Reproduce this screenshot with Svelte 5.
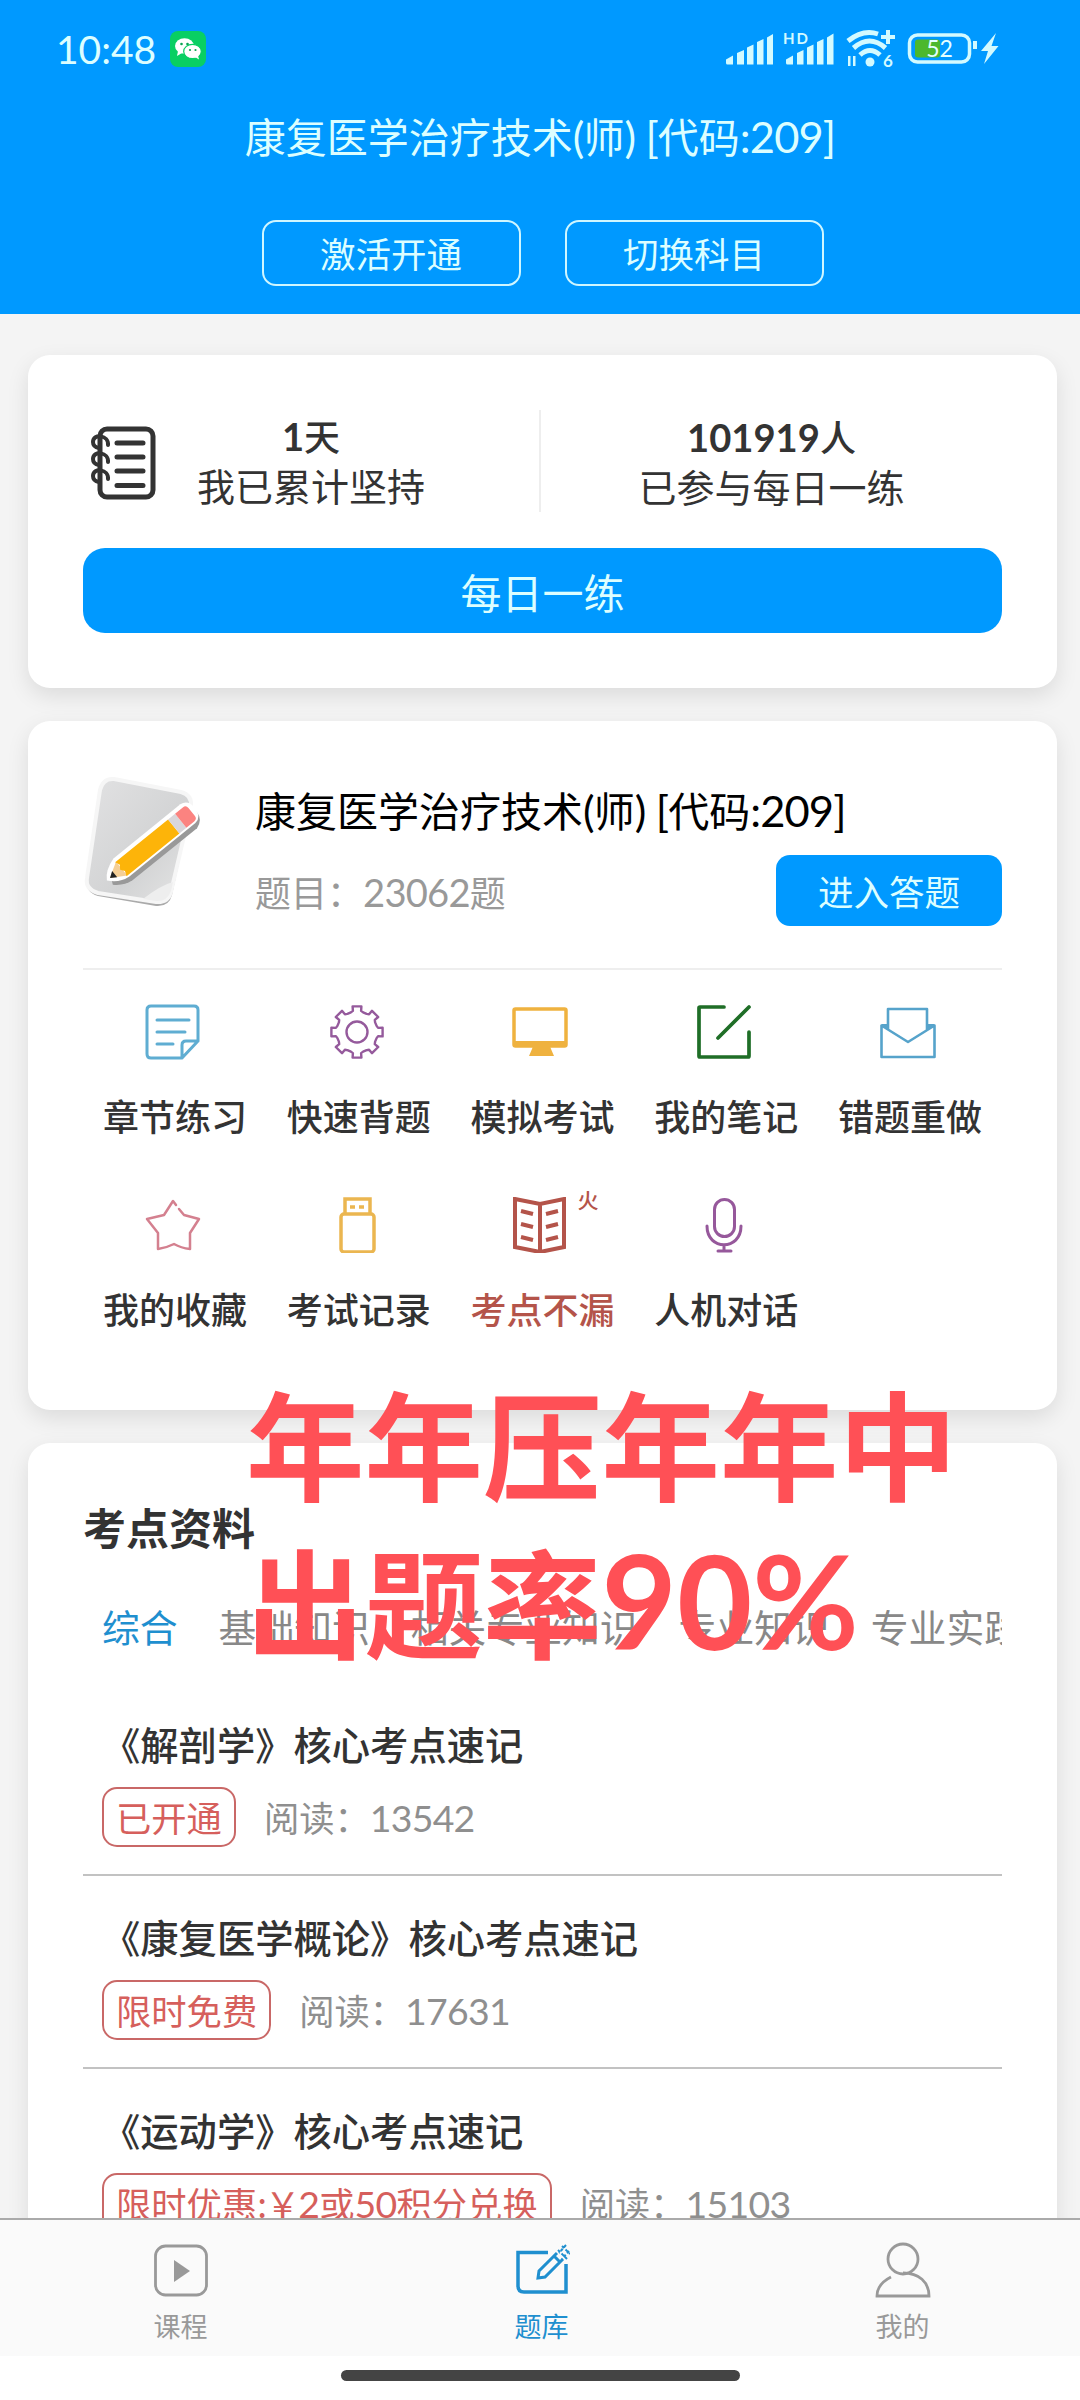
<script>
  const title = '康复医学治疗技术'

  let tools = [
    { icon: 'note', name: '章节练习', color: '#5fadd2' },
    { icon: 'gear', name: '快速背题', color: '#955a9c' },
    { icon: 'screen', name: '模拟考试', color: '#efb23f' },
    { icon: 'edit', name: '我的笔记', color: '#1f6e27' },
    { icon: 'mail', name: '错题重做', color: '#56a3cb' },
    { icon: 'star', name: '我的收藏', color: '#d4808f' },
    { icon: 'usb', name: '考试记录', color: '#ebb650' },
    { icon: 'book', name: '考点不漏', color: '#b4544a', hot: true },
    { icon: 'mic', name: '人机对话', color: '#96589b' }
  ]

  let tabs = ['综合', '基础知识', '相关专业知识', '专业知识', '专业实践能力']
  let activeTab = $state(0)

  let materials = [
    { name: '《解剖学》核心考点速记', tag: ['已开通'], reads: 13542 },
    { name: '《康复医学概论》核心考点速记', tag: ['限时免费'], reads: 17631 },
    { name: '《运动学》核心考点速记', tag: ['限时优惠', ':￥', '2', '或', '50', '积分兑换'], reads: 15103 }
  ]

  let nav = [
    { icon: 'play', name: '课程' },
    { icon: 'bank', name: '题库' },
    { icon: 'user', name: '我的' }
  ]
  let activeNav = $state(1)

  // outline of the eight-tooth gear, drawn around 0,0
  let gear = () => {
    let points = []
    for (let i = 0; i < 8; i++) {
      let a = i * Math.PI / 4
      let corners = [[-0.3, 20.5], [-0.19, 21.5], [-0.17, 26], [0.17, 26], [0.19, 21.5], [0.3, 20.5]]
      for (let [da, r] of corners) {
        points.push(`${(Math.sin(a + da) * r).toFixed(1)},${(-Math.cos(a + da) * r).toFixed(1)}`)
      }
    }
    return points.join(' ')
  }
</script>

<div class="screen">
  <header>
    <div class="status">
      <span class="clock">10:48</span>
      <svg class="wechat" viewBox="0 0 36 36">
        <rect width="36" height="36" rx="8" fill="#09cf63" />
        <ellipse cx="14.500" cy="15" rx="9.500" ry="7.800" fill="#fff" />
        <path d="M8 20l-1 5 5-3z" fill="#fff" />
        <ellipse cx="22.500" cy="20.500" rx="8.800" ry="7.200" fill="#fff" stroke="#09cf63" stroke-width="1.200" />
        <path d="M25 26l4 2.500-1-4z" fill="#fff" />
        <g fill="#09a452">
          <circle cx="11.500" cy="13" r="1.300" /><circle cx="17.500" cy="13" r="1.300" />
          <circle cx="20" cy="19" r="1.100" /><circle cx="25.500" cy="19" r="1.100" />
        </g>
      </svg>
      <svg class="signals" viewBox="0 0 300 40">
        <g fill="#d3faff">
          <path d="M0 30.500l7-4v9H1.500q-1.500 0-1.500-1.500zM11 24l7-3v14.500h-7zM21 18.500l6.500-3v20H21zM31 13l6.500-3v25.500H31zM41 8.500l6-3.500v30.500h-6z" />
          <path d="M60 30.500l7-4v9h-5.500q-1.500 0-1.500-1.500zM71 24l6.500-3v14.500H71zM81 18.500l6.500-3v20H81zM91 13l6.500-3v25.500H91zM101 8.500l6.500-4v31H101z" />
          <text x="57" y="15" font-size="15" font-weight="bold" textLength="25">HD</text>
          <circle cx="144" cy="33" r="4.500" />
          <text x="157" y="38" font-size="17" font-weight="bold">6</text>
          <path d="M160 1h4v5h5v4h-5v5h-4v-5h-5V6h5z" />
          <path d="M122 27v10h2.500V27zM127 27v10h2.500V27z" />
          <path d="M275 20h4v-8h-4z" transform="translate(-28 0)" />
          <path d="M270 4l-15 18h7l-4 13 14.500-18h-7z" />
        </g>
        <g fill="none" stroke="#d3faff">
          <path d="M122 12q15-12 30-7" stroke-width="5" />
          <path d="M127.500 19q16-14 32 0" stroke-width="5" />
          <path d="M134 26q10-9 20 0" stroke-width="5" />
          <rect x="183.500" y="6" width="60" height="27" rx="8" stroke-width="3.500" />
        </g>
        <rect x="189" y="10.500" width="25" height="18" rx="3" fill="#4cb82d" />
        <text x="213.500" y="28" font-size="23" text-anchor="middle" fill="#e4ffff">52</text>
      </svg>
    </div>
    <h1>{title}<span class="num">(</span>师<span class="num">) [</span>代码<span class="num">:209]</span></h1>
    <div class="actions">
      <button>激活开通</button>
      <button>切换科目</button>
    </div>
  </header>

  <main>
    <section class="card daily">
      <div class="stats">
        <svg class="notebook" viewBox="0 0 66 74" fill="none" stroke="#333" stroke-linecap="round">
          <rect x="10" y="3" width="53" height="68" rx="7" stroke-width="5" />
          <path d="M27 17h26M27 31h26M27 45h26M27 59.500h26" stroke-width="5" />
          <path d="M18 19c1-10-15-12-15-3q0 5 6 6M18 36c1-10-15-12-15-3q0 5 6 6M18 53c1-10-15-12-15-3q0 5 6 6" stroke-width="4" />
        </svg>
        <div class="stat days">
          <b><span class="num">1</span>天</b>
          <span>我已累计坚持</span>
        </div>
        <div class="stat people">
          <b><span class="num">101919</span>人</b>
          <span>已参与每日一练</span>
        </div>
      </div>
      <button class="wide">每日一练</button>
    </section>

    <section class="card bank">
      <div class="subject">
        <svg class="pad" viewBox="0 0 132 134">
          <defs>
            <linearGradient id="paper" x1="0" y1="0" x2="1" y2="1">
              <stop offset="0" stop-color="#e2e2e3" />
              <stop offset=".6" stop-color="#d2d3d4" />
              <stop offset="1" stop-color="#e6e6e6" />
            </linearGradient>
          </defs>
          <path d="M31 5l67 13q11 3 10 14L89 119q-3 12-16 11L15 120Q2 116 4 104L17 16Q20 4 31 5z" fill="#aaa" />
          <path d="M31 3l67 13q11 3 10 14L88 116q-3 11-15 10L15 117Q2 113 4 102L17 14Q20 2 31 3z" fill="url(#paper)" stroke="#f6f6f6" stroke-width="4" />
          <path d="M60 123q18-14 30-17l-2 9q-4 11-15 10z" fill="#eee" />
          <g transform="translate(27 102) rotate(-39)">
            <path d="M-2 4Q1-7 15-11H99q10 1 10 11t-10 13H16Q6 12-2 4z" fill="#999" transform="translate(0 3)" />
            <path d="M-4 0Q1-9 15-13H101q9 1 9 12t-9 12H16Q4 10-4 0z" fill="#fff" />
            <path d="M0 0L15-9V9z" fill="#f5cf96" />
            <path d="M0 0l6-4v8z" fill="#222" />
            <path d="M14-9H82V9H14l2-5-3-4 3-4z" fill="#fdb409" />
            <path d="M82-9h9V9h-9z" fill="#d9d6da" />
            <path d="M91-9h10q4 0 4 4v10q0 4-4 4H91z" fill="#fb8380" />
          </g>
        </svg>
        <div class="info">
          <h2>{title}<span class="num">(</span>师<span class="num">) [</span>代码<span class="num">:209]</span></h2>
          <div class="count">
            <span>题目：<span class="num">23062</span>题</span>
            <button class="enter">进入答题</button>
          </div>
        </div>
      </div>

      <div class="tools">
        {#each tools as tool}
          <div class="tool" class:hot={tool.hot}>
            <svg viewBox="0 0 56 56" fill="none" stroke={tool.color} stroke-width="3" stroke-linecap="round" stroke-linejoin="round">
              {#if tool.icon === 'note'}
                <path d="M53 37V6q0-4-4-4H6Q2 2 2 6v44q0 4 4 4h31L53 37H41q-4 0-4 4v13M12 16h32M12 28h28M12 40h16" />
              {:else if tool.icon === 'gear'}
                <g transform="translate(28 28)" stroke-width="2.400">
                  <polygon points={gear()} />
                  <circle r="10.500" />
                </g>
              {:else if tool.icon === 'screen'}
                <rect x="2" y="5" width="52" height="37" rx="1.500" stroke-width="3.500" />
                <path d="M2 37h52v5H38l1 3 3 7H17l3-7 1-3H2z" fill={tool.color} stroke="none" />
              {:else if tool.icon === 'edit'}
                <path d="M28 3H4q-1 0-1 1v48q0 1 1 1h48q1 0 1-1V28M22 34L53 3" stroke-width="3.700" />
              {:else if tool.icon === 'mail'}
                <path d="M8 25V5h39v20M1.500 21.500v31.500h53V21.500L28 38z" stroke-width="2.600" />
                <path d="M1 20h7v6zM55 20h-7v6z" fill={tool.color} stroke="none" />
              {:else if tool.icon === 'star'}
                <path d="M31 8l-3-4-9 14L2 22l11 14v16q8-1 16-5 7 4 16 5V36L54 22 39 18l-5-6" stroke-width="2.500" />
              {:else if tool.icon === 'usb'}
                <rect x="12" y="17" width="33" height="38" rx="3" stroke-width="3.500" />
                <path d="M16 17V2h25v15M21 10h5M30 10h5" stroke-width="3.500" stroke-linecap="butt" stroke-linejoin="miter" />
              {:else if tool.icon === 'book'}
                <path d="M3 2l25 5 24-5v48l-24 5-25-5zM28 7v48" stroke-width="4" stroke-linejoin="miter" />
                <path d="M9 14l12 3M9 27l12 3M9 40l12 3M34 17l12-3M34 30l12-3M34 43l12-3" stroke-width="4" stroke-linecap="butt" />
              {:else}
                <rect x="18.500" y="2.500" width="20" height="37" rx="10" />
                <path d="M11 29c0 25 34 25 34 0M28 48v6M22 54h13" />
              {/if}
            </svg>
            <span>{tool.name}</span>
            {#if tool.hot}<sup>火</sup>{/if}
          </div>
        {/each}
      </div>
    </section>

    <section class="card materials">
      <h3>考点资料</h3>
      <div class="tabs">
        {#each tabs as tab, i}
          <span class:active={activeTab === i} role="tab" tabindex="0" aria-selected={activeTab === i} onclick={() => activeTab = i} onkeydown={() => activeTab = i}>{tab}</span>
        {/each}
      </div>
      {#each materials as item}
        <article>
          <h4>{item.name}</h4>
          <div class="meta">
            <span class="tag">
              {#each item.tag as part}{#if /^\d+$/.test(part)}<span class="num">{part}</span>{:else if part === ':￥'}<span class="yen">:￥</span>{:else}{part}{/if}{/each}
            </span>
            <span>阅读：<span class="num">{item.reads}</span></span>
          </div>
        </article>
      {/each}
    </section>
  </main>

  <footer>
    <nav>
      {#each nav as item, i}
        <button class:active={activeNav === i} onclick={() => activeNav = i}>
          <svg viewBox="0 0 56 56" fill="none" stroke="currentColor" stroke-width="2.800">
            {#if item.icon === 'play'}
              <rect x="2.500" y="4" width="51" height="49" rx="10" />
              <path d="M21 18l16 11-16 11z" fill="currentColor" stroke="none" />
            {:else if item.icon === 'bank'}
              <path d="M34 10.500H4V44q0 6 6 6h42V22" stroke-width="3.500" />
              <path d="M43 11L25 29l-1 7 7-1 18-18M40 14l6 6" stroke-width="3" />
              <path d="M44 8l9 9M48 4l8 8M52 3l-7 8M55 9l-7 8" stroke-width="2" stroke-dasharray="3 2" />
            {:else}
              <ellipse cx="28" cy="17" rx="15" ry="15" />
              <path d="M16 35Q2 42 2 54h52c0-14-10-23-26-23" />
            {/if}
          </svg>
          <span>{item.name}</span>
        </button>
      {/each}
    </nav>
    <div class="home"></div>
  </footer>

  <div class="slogan">
    <p>年年压年年中</p>
    <p class="second">出题率<span>90%</span></p>
  </div>
</div>

<style>
  :global(body) {
    margin: 0;
    background: #f4f4f4;
  }
  .screen {
    position: relative;
    width: 1080px;
    height: 2400px;
    overflow: hidden;
    display: flex;
    flex-direction: column;
    background: #f4f4f4;
    color: #333;
    font-family: 'Noto Sans CJK SC', sans-serif;
    font-size: 36px;
  }
  h1, h2, h3, h4, p {
    margin: 0;
    font-weight: 400;
  }
  button {
    padding: 0;
    border: none;
    background: none;
    color: inherit;
    font: inherit;
  }
  .num {
    font-family: Lato, sans-serif;
    font-size: 1.06em;
    letter-spacing: -.02em;
    line-height: 1;
  }

  header {
    height: 314px;
    flex: none;
    background: #09f;
    color: #dcfeff;
    text-align: center;
  }
    .status {
      height: 98px;
      display: flex;
      align-items: center;
      padding: 0 54px 0 56px;
      box-sizing: border-box;
    }
      .clock {
        font-family: Lato, sans-serif;
        font-size: 39px;
        width: 114px;
        text-align: left;
      }
      .wechat {
        width: 36px;
        height: 36px;
      }
      .signals {
        width: 300px;
        height: 40px;
        margin-left: auto;
        overflow: visible;
        font-family: Lato, sans-serif;
      }
    h1 {
      font-size: 41px;
      line-height: 74px;
      white-space: pre;
    }
    .actions {
      display: flex;
      justify-content: center;
      gap: 44px;
      margin-top: 48px;
      padding-left: 5px;
    }
      .actions button {
        width: 259px;
        height: 66px;
        box-sizing: border-box;
        border: 2px solid #cff6ff;
        border-radius: 14px;
        font-size: 35.500px;
        line-height: 62px;
      }

  main {
    flex: 1;
    min-height: 0;
    overflow: hidden;
    display: flex;
    flex-direction: column;
    gap: 33px;
    padding: 41px 23px 0 28px;
  }
  .card {
    flex: none;
    box-sizing: border-box;
    padding: 55px;
    border-radius: 22px;
    background: #fff;
    box-shadow: 0 8px 22px rgba(0, 0, 0, .1);
  }

  .daily {
    height: 333px;
  }
    .stats {
      display: flex;
      align-items: center;
      height: 102px;
    }
      .notebook {
        width: 66px;
        height: 74px;
        margin: 4px 0 0 7px;
      }
      .stat {
        display: flex;
        flex-direction: column;
        align-items: center;
        font-size: 38px;
        line-height: 50px;
      }
      .stat b {
        font-size: 36px;
        font-weight: 500;
      }
      .stat b .num {
        font-weight: 700;
        letter-spacing: 0;
      }
      .days {
        flex: 0 0 385px;
        width: 385px;
        box-sizing: border-box;
        height: 102px;
        padding-right: 73px;
        border-right: 2px solid #eee;
      }
      .people {
        flex: 1;
      }
    .wide {
      display: block;
      width: 100%;
      height: 85px;
      margin-top: 36px;
      border-radius: 22px;
      background: #09f;
      color: #dcfeff;
      font-size: 41px;
    }

  .bank {
    height: 689px;
  }
    .subject {
      display: flex;
      height: 194px;
      box-sizing: border-box;
      border-bottom: 2px solid #eee;
    }
      .pad {
        width: 132px;
        height: 134px;
        margin-right: 40px;
        overflow: visible;
      }
      .info {
        flex: 1;
      }
      h2 {
        color: #000;
        font-size: 41px;
        line-height: 66px;
        white-space: pre;
      }
      .count {
        display: flex;
        justify-content: space-between;
        align-items: center;
        margin-top: 13px;
        color: #999;
      }
      .enter {
        width: 226px;
        height: 71px;
        border-radius: 14px;
        background: #09f;
        color: #dcfeff;
        font-size: 35.500px;
      }
    .tools {
      display: grid;
      grid-template-columns: repeat(5, 1fr);
      grid-auto-rows: 193px;
      padding-top: 34px;
    }
      .tool {
        position: relative;
        display: flex;
        flex-direction: column;
        align-items: center;
        font-weight: 500;
      }
      .tool svg {
        width: 56px;
        height: 56px;
        margin-right: 4px;
      }
      .tool span {
        margin-top: 28px;
        line-height: 54px;
      }
      .hot {
        color: #b4544a;
      }
      .hot sup {
        position: absolute;
        top: -8px;
        right: 36px;
        font-size: 21px;
        line-height: 21px;
      }

  .materials {
    height: 900px;
  }
    h3 {
      font-size: 43px;
      font-weight: 700;
      line-height: 56px;
    }
    .tabs {
      display: flex;
      gap: 41px;
      margin-top: 44px;
      padding-left: 19px;
      overflow: hidden;
      color: #888;
      font-size: 37.800px;
      line-height: 56px;
      white-space: nowrap;
    }
      .tabs .active {
        color: #1f8fcf;
      }
    article {
      height: 193px;
      box-sizing: border-box;
      padding: 0 19px;
      border-bottom: 2px solid #c2c2c2;
    }
    .tabs + article {
      margin-top: 29px;
    }
    h4 {
      padding-top: 34px;
      font-size: 38.300px;
      font-weight: 500;
      line-height: 54px;
    }
    .meta {
      display: flex;
      align-items: center;
      gap: 28px;
      margin-top: 16px;
      color: #8f8f8f;
      font-size: 35.300px;
      line-height: 56px;
    }
      .tag {
        padding: 0 12px;
        border: 2px solid #c96867;
        border-radius: 15px;
        color: #d65f5c;
        white-space: nowrap;
      }
      .yen {
        letter-spacing: -2px;
      }

  footer {
    flex: none;
    height: 182px;
    box-sizing: border-box;
    border-top: 2px solid #aaa;
    background: #fff;
  }
    nav {
      display: grid;
      grid-template-columns: repeat(3, 361px);
      height: 136px;
      overflow: hidden;
      background: #fafafa;
    }
      nav button {
        display: flex;
        flex-direction: column;
        align-items: center;
        padding-top: 22px;
        color: #999;
        font-size: 27px;
      }
      nav svg {
        width: 56px;
        height: 56px;
      }
      nav span {
        line-height: 36px;
        margin-top: 10px;
      }
      nav .active {
        color: #1f8fcf;
      }
    .home {
      width: 399px;
      height: 11px;
      margin: 14px auto 0;
      border-radius: 6px;
      background: #444;
    }

  /* promo caption laid over the cards */
  .slogan {
    position: absolute;
    top: 1362px;
    left: 246px;
    color: #ff5056;
    font-size: 118.500px;
    line-height: 158px;
    white-space: nowrap;
  }
    .slogan p {
      font-weight: 700;
    }
    .slogan span {
      font-family: Lato, sans-serif;
      font-size: 130px;
      line-height: 1;
    }
</style>
